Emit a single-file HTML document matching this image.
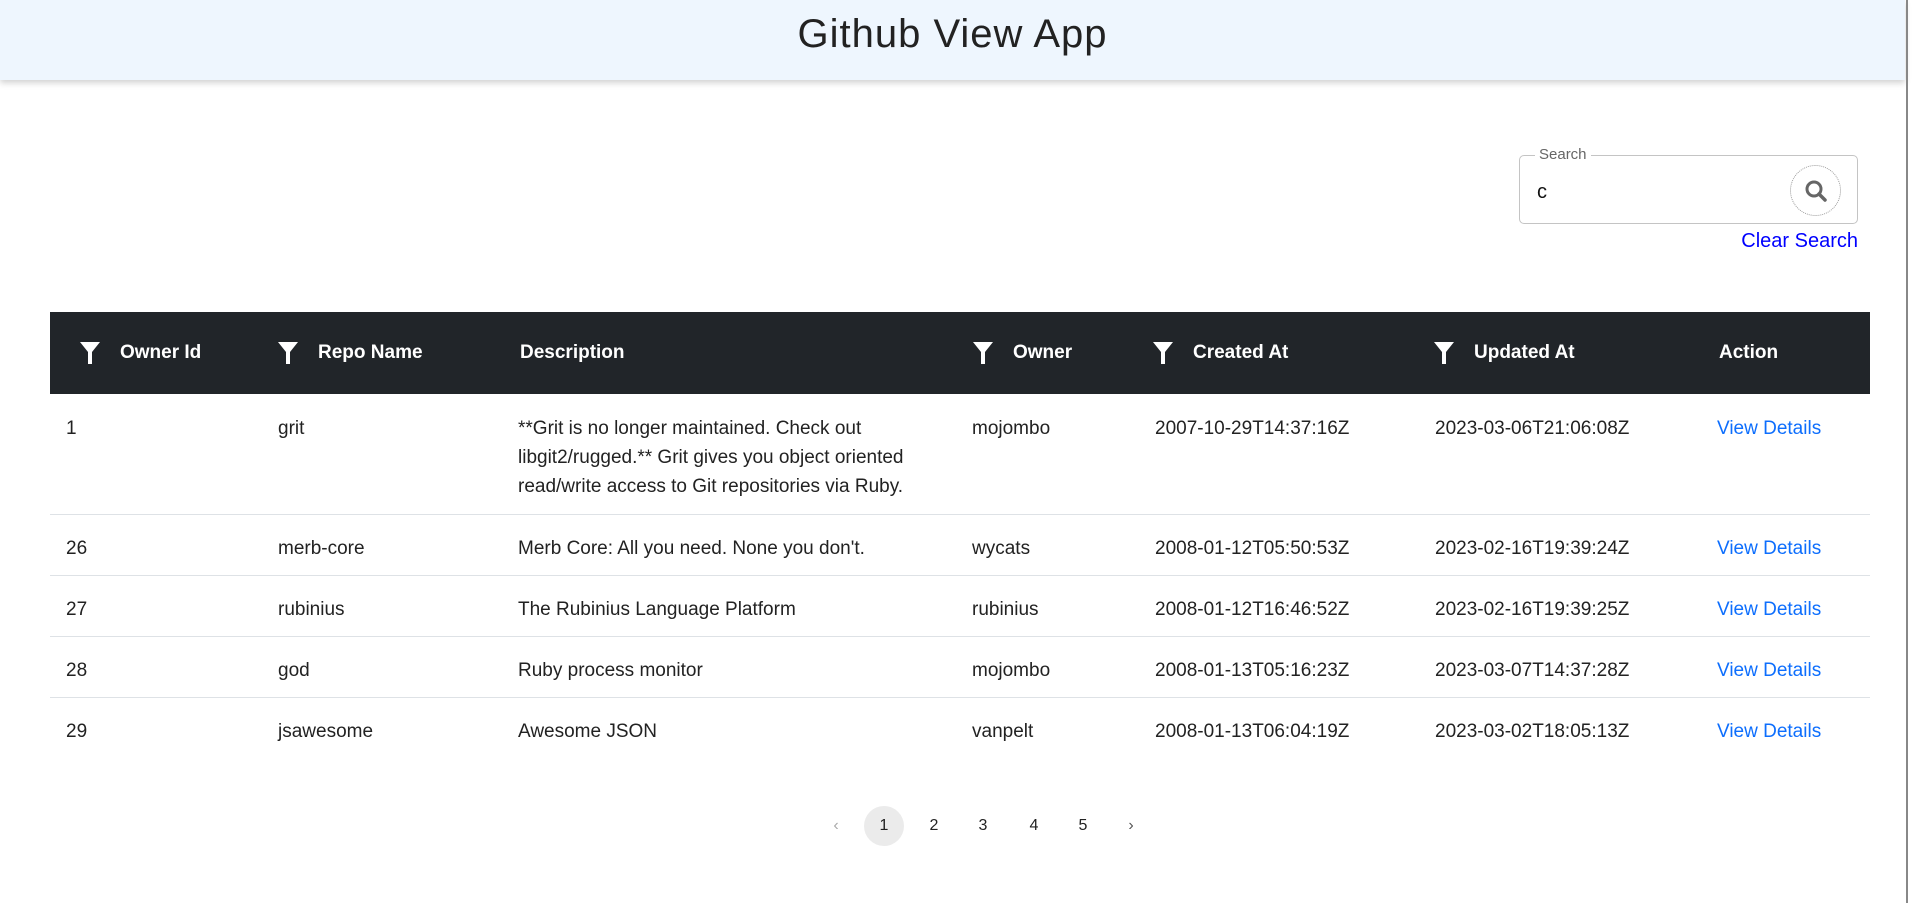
<!DOCTYPE html>
<html><head><meta charset="utf-8"><style>
*{box-sizing:border-box;margin:0;padding:0}
body{width:1920px;height:903px;overflow:hidden;background:#fff;font-family:"Liberation Sans",sans-serif;position:relative}
.hdr{position:absolute;left:0;top:0;width:1905px;height:80px;background:#eef6fe;box-shadow:0 3px 6px rgba(0,0,0,.18);text-align:center}
.hdr h1{font-weight:400;font-size:40px;line-height:68px;color:#222;letter-spacing:1px}
.sb{position:absolute;left:1906px;top:0;width:2px;height:903px;background:#888}
.search{position:absolute;left:1519px;top:155px;width:339px;height:69px;border:1px solid #c4c4c4;border-radius:5px}
.search .lbl{position:absolute;left:15px;top:-10px;background:#fff;padding:0 4px;font-size:15px;color:#666}
.search .val{position:absolute;left:17px;top:25px;font-size:20px;color:#111}
.search .btn{position:absolute;left:270px;top:9px;width:51px;height:51px;border:1px dotted #999;border-radius:50%}
.clear{position:absolute;right:62px;top:230px;font-size:20px;color:#0000ff}
table{position:absolute;left:50px;top:312px;width:1820px;border-collapse:collapse;font-size:19px;color:#222}
th{background:#212529;color:#fff;height:82px;text-align:left;font-weight:700;font-size:19px;position:relative}
td{vertical-align:top;padding-top:20px;line-height:29px;border-bottom:1px solid #dee2e6}
tr.r1 td{height:120px}
tr.r td{height:61px}
tr.r td{padding-top:19px}
a{color:#0d6efd;text-decoration:none}
.f{display:inline-block;vertical-align:middle;margin-right:20px}
.pg{position:absolute;top:806px;width:40px;height:40px;border-radius:50%;text-align:center;line-height:40px;font-size:16px;color:#222}
</style></head><body>
<div class="hdr"><h1>Github View App</h1></div>
<div class="sb"></div>
<div class="search"><span class="lbl">Search</span><span class="val">c</span>
<div class="btn"><svg width="51" height="51" viewBox="0 0 51 51"><circle cx="23" cy="23" r="7" fill="none" stroke="#666" stroke-width="3"/><line x1="28" y1="28" x2="34" y2="34" stroke="#666" stroke-width="3.5" stroke-linecap="round"/></svg></div></div>
<div class="clear">Clear Search</div>
<table>
<colgroup><col style="width:212px"><col style="width:240px"><col style="width:454px"><col style="width:183px"><col style="width:280px"><col style="width:282px"><col></colgroup>
<tr><th style="padding-left:30px"><svg class="f" width="20" height="22" viewBox="0 0 20 22"><path d="M0 0H20L12 10V22H8V10Z" fill="#fff"/></svg>Owner Id</th>
<th style="padding-left:16px"><svg class="f" width="20" height="22" viewBox="0 0 20 22"><path d="M0 0H20L12 10V22H8V10Z" fill="#fff"/></svg>Repo Name</th>
<th style="padding-left:18px">Description</th>
<th style="padding-left:17px"><svg class="f" width="20" height="22" viewBox="0 0 20 22"><path d="M0 0H20L12 10V22H8V10Z" fill="#fff"/></svg>Owner</th>
<th style="padding-left:14px"><svg class="f" width="20" height="22" viewBox="0 0 20 22"><path d="M0 0H20L12 10V22H8V10Z" fill="#fff"/></svg>Created At</th>
<th style="padding-left:15px"><svg class="f" width="20" height="22" viewBox="0 0 20 22"><path d="M0 0H20L12 10V22H8V10Z" fill="#fff"/></svg>Updated At</th>
<th style="padding-left:18px">Action</th></tr>
<tr class="r1"><td style="padding-left:16px">1</td><td style="padding-left:16px">grit</td><td style="padding-left:16px;padding-right:10px">**Grit is no longer maintained. Check out libgit2/rugged.** Grit gives you object oriented read/write access to Git repositories via Ruby.</td><td style="padding-left:16px">mojombo</td><td style="padding-left:16px">2007-10-29T14:37:16Z</td><td style="padding-left:16px">2023-03-06T21:06:08Z</td><td style="padding-left:16px"><a>View Details</a></td></tr>
<tr class="r"><td style="padding-left:16px">26</td><td style="padding-left:16px">merb-core</td><td style="padding-left:16px">Merb Core: All you need. None you don't.</td><td style="padding-left:16px">wycats</td><td style="padding-left:16px">2008-01-12T05:50:53Z</td><td style="padding-left:16px">2023-02-16T19:39:24Z</td><td style="padding-left:16px"><a>View Details</a></td></tr>
<tr class="r"><td style="padding-left:16px">27</td><td style="padding-left:16px">rubinius</td><td style="padding-left:16px">The Rubinius Language Platform</td><td style="padding-left:16px">rubinius</td><td style="padding-left:16px">2008-01-12T16:46:52Z</td><td style="padding-left:16px">2023-02-16T19:39:25Z</td><td style="padding-left:16px"><a>View Details</a></td></tr>
<tr class="r"><td style="padding-left:16px">28</td><td style="padding-left:16px">god</td><td style="padding-left:16px">Ruby process monitor</td><td style="padding-left:16px">mojombo</td><td style="padding-left:16px">2008-01-13T05:16:23Z</td><td style="padding-left:16px">2023-03-07T14:37:28Z</td><td style="padding-left:16px"><a>View Details</a></td></tr>
<tr class="r"><td style="padding-left:16px;border:none">29</td><td style="padding-left:16px;border:none">jsawesome</td><td style="padding-left:16px;border:none">Awesome JSON</td><td style="padding-left:16px;border:none">vanpelt</td><td style="padding-left:16px;border:none">2008-01-13T06:04:19Z</td><td style="padding-left:16px;border:none">2023-03-02T18:05:13Z</td><td style="padding-left:16px;border:none"><a>View Details</a></td></tr>
</table>
<div class="pg" style="left:816px;color:#aaa">&#8249;</div>
<div class="pg" style="left:864px;background:#ebebeb">1</div>
<div class="pg" style="left:914px">2</div>
<div class="pg" style="left:963px">3</div>
<div class="pg" style="left:1014px">4</div>
<div class="pg" style="left:1063px">5</div>
<div class="pg" style="left:1111px;color:#555">&#8250;</div>
</body></html>
